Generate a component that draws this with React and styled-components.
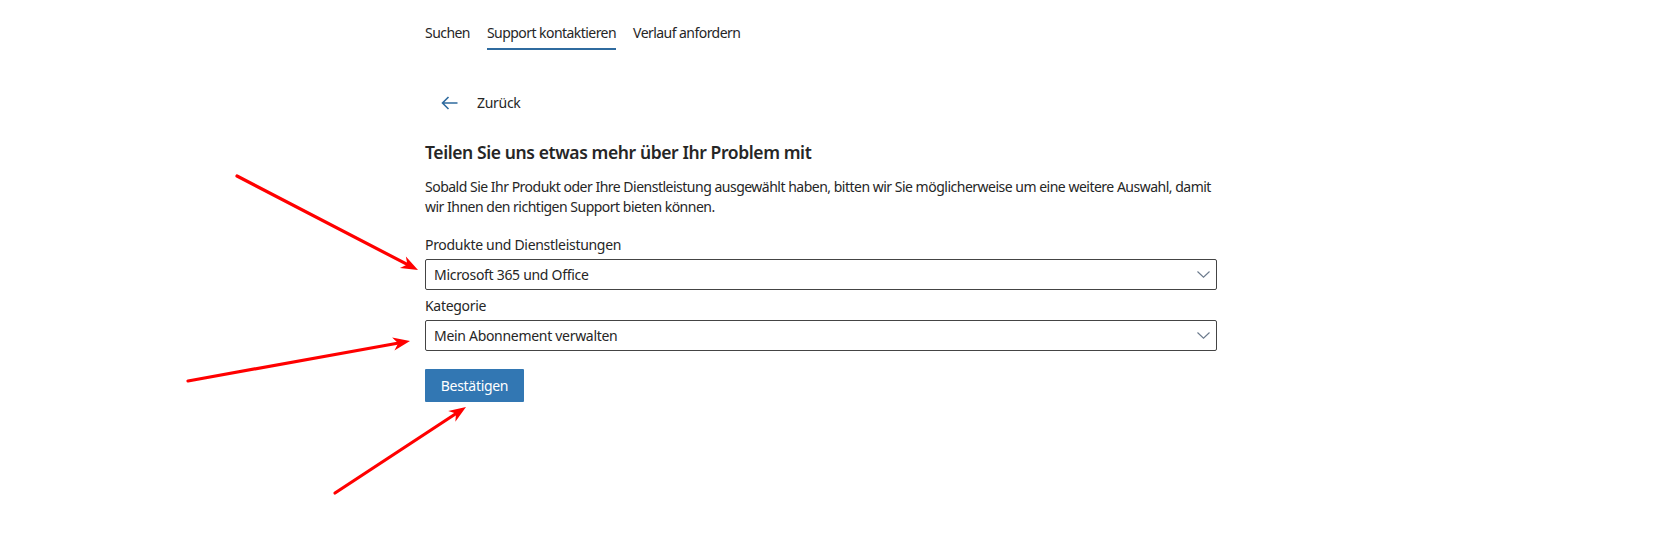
import React from 'react';
import styled, { createGlobalStyle } from 'styled-components';

const GlobalStyle = createGlobalStyle`
    body {
        margin: 0;
        background: #ffffff;
        font-family: "Noto Sans", "Open Sans", Arial, sans-serif;
        color: #262626;
    }
`;

const tabs = [
    { label: 'Suchen' },
    { label: 'Support kontaktieren', active: true },
    { label: 'Verlauf anfordern' },
];

const ChevronDown = () => (
    <svg width="13" height="7" viewBox="0 0 13 7" fill="none">
        <path d="M0.5 0.5 L6.5 6.2 L12.5 0.5" stroke="#6b7a8c" strokeWidth="1.1" />
    </svg>
);

const BackArrow = () => (
    <svg width="17" height="14" viewBox="0 0 17 14" fill="none">
        <path d="M16.5 7 H1.5 M7.5 1 L1.5 7 L7.5 13" stroke="#2f6b9f" strokeWidth="1.6" />
    </svg>
);

const Select = ({ value }) => (
    <SelectBox>
        <span>{value}</span>
        <ChevronDown />
    </SelectBox>
);

// red annotation arrows drawn over the screenshot
const arrows = [
    { x1: 237, y1: 176, x2: 418, y2: 270 },
    { x1: 188, y1: 381, x2: 410, y2: 341 },
    { x1: 335, y1: 493, x2: 466, y2: 407 },
];

const ArrowHead = ({ x1, y1, x2, y2 }) => {
    const a = Math.atan2(y2 - y1, x2 - x1);
    const len = 17;
    const w = 6.5;
    const bx = x2 - len * Math.cos(a);
    const by = y2 - len * Math.sin(a);
    const px = -Math.sin(a) * w;
    const py = Math.cos(a) * w;
    const nx = x2 - (len - 5) * Math.cos(a);
    const ny = y2 - (len - 5) * Math.sin(a);
    return (
        <polygon
            points={`${x2},${y2} ${bx + px},${by + py} ${nx},${ny} ${bx - px},${by - py}`}
            fill="#ff0000"
        />
    );
};

const Annotations = () => (
    <AnnotationLayer width="1666" height="557" viewBox="0 0 1666 557">
        {arrows.map((ar, i) => {
            const a = Math.atan2(ar.y2 - ar.y1, ar.x2 - ar.x1);
            return (
                <g key={i}>
                    <line
                        x1={ar.x1}
                        y1={ar.y1}
                        x2={ar.x2 - 10 * Math.cos(a)}
                        y2={ar.y2 - 10 * Math.sin(a)}
                        stroke="#ff0000"
                        strokeWidth="3.2"
                        strokeLinecap="round"
                    />
                    <ArrowHead {...ar} />
                </g>
            );
        })}
    </AnnotationLayer>
);

const App = () => {
    return (
        <Page>
            <GlobalStyle />
            <Content>
                <TabBar>
                    {tabs.map((t) => (
                        <Tab key={t.label} $active={t.active}>{t.label}</Tab>
                    ))}
                </TabBar>

                <BackLink>
                    <BackArrow />
                    <span>Zurück</span>
                </BackLink>

                <Heading>Teilen Sie uns etwas mehr über Ihr Problem mit</Heading>
                <Intro>
                    Sobald Sie Ihr Produkt oder Ihre Dienstleistung ausgewählt haben, bitten wir Sie möglicherweise um eine weitere Auswahl, damit wir Ihnen den richtigen Support bieten können.
                </Intro>

                <Field>
                    <Label>Produkte und Dienstleistungen</Label>
                    <Select value="Microsoft 365 und Office" />
                </Field>
                <Field>
                    <Label>Kategorie</Label>
                    <Select value="Mein Abonnement verwalten" />
                </Field>

                <ConfirmButton>Bestätigen</ConfirmButton>
            </Content>
            <Annotations />
        </Page>
    );
};

export default App;


/* Styled Components */
const Page = styled.div`
    position: relative;
    width: 1666px;
    height: 557px;
    overflow: hidden;
`;

const Content = styled.div`
    width: 792px;
    padding: 23px 0 0 425px;
    display: flex;
    flex-direction: column;
    align-items: flex-start;
    font-size: 14px;
    letter-spacing: -0.3px;
`;

const TabBar = styled.nav`
    display: flex;
    gap: 17px;
`;

const Tab = styled.a`
    color: #262626;
    font-size: 14px;
    letter-spacing: -0.55px;
    line-height: 20px;
    padding-bottom: 5px;
    border-bottom: 2px solid ${(p) => (p.$active ? '#2f6b9f' : 'transparent')};
    cursor: pointer;
`;

const BackLink = styled.a`
    display: flex;
    align-items: center;
    gap: 19px;
    margin: 43px 0 0 16px;
    line-height: 20px;
    font-size: 14px;
    color: #262626;
    cursor: pointer;
`;

const Heading = styled.h2`
    margin: 26px 0 0;
    font-size: 17.5px;
    letter-spacing: -0.4px;
    font-weight: 600;
    line-height: 26px;
    color: #262626;
`;

const Intro = styled.p`
    margin: 12px 0 0;
    font-size: 14px;
    letter-spacing: -0.5px;
    line-height: 20px;
`;

const Field = styled.div`
    display: flex;
    flex-direction: column;
    align-self: stretch;
    margin-top: 18px;

    & + & {
        margin-top: 6px;
    }
`;

const Label = styled.label`
    font-size: 14px;
    line-height: 20px;
    margin-bottom: 4px;
`;

const SelectBox = styled.div`
    display: flex;
    align-items: center;
    justify-content: space-between;
    height: 29px;
    padding: 0 6px 0 8px;
    border: 1px solid #444444;
    border-radius: 2px;
    font-size: 14px;
    color: #262626;
`;

const ConfirmButton = styled.button`
    margin-top: 18px;
    width: 99px;
    height: 33px;
    border: none;
    border-radius: 1px;
    background: #3277b3;
    color: #ffffff;
    font-family: inherit;
    font-size: 14px;
    letter-spacing: -0.3px;
    cursor: pointer;
`;

const AnnotationLayer = styled.svg`
    position: absolute;
    left: 0;
    top: 0;
    pointer-events: none;
`;
